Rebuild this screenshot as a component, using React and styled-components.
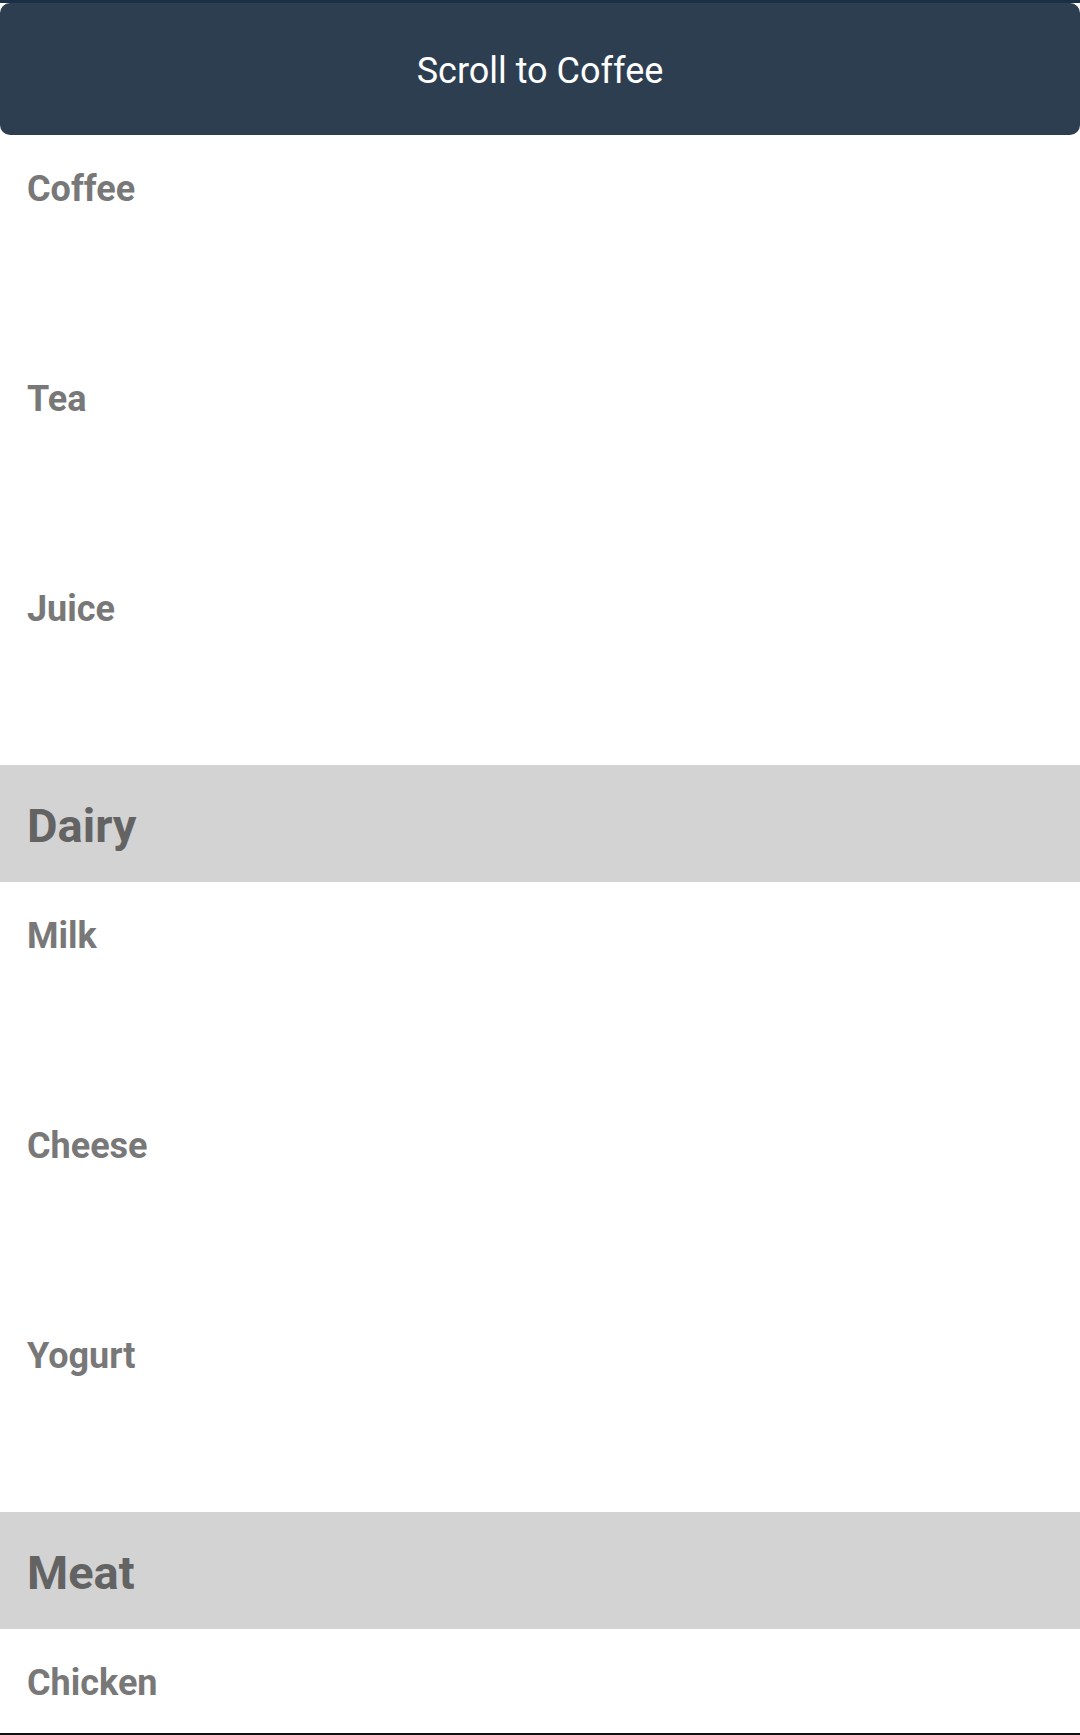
import React from 'react'
import styled, { createGlobalStyle } from 'styled-components'

const GlobalStyle = createGlobalStyle`
  html, body {
    margin: 0;
    padding: 0;
    background: #ffffff;
    font-family: Roboto, "Liberation Sans", Arial, sans-serif;
  }
  * {
    box-sizing: border-box;
  }
`

const Screen = styled.div`
  height: 1735px;
  display: flex;
  flex-direction: column;
  overflow: hidden;
  background: #ffffff;
  border-bottom: 2px solid #111111;
`

const StatusStrip = styled.div`
  height: 3px;
  flex-shrink: 0;
  background: #1b2f47;
`

const ScrollButton = styled.button`
  flex-shrink: 0;
  height: 132px;
  width: 100%;
  border: none;
  border-radius: 10px;
  background: #2d3e50;
  color: #ffffff;
  font-family: Roboto, "Liberation Sans", Arial, sans-serif;
  font-size: 36px;
  font-weight: 400;
  cursor: pointer;
  padding: 4px 0 0;

  &:focus {
    outline: none;
  }
`

const List = styled.div`
  flex: 1;
  overflow: hidden;
`

const SectionHeader = styled.div`
  height: 117px;
  padding: 33px 27px 0;
  background: #d3d3d3;
  color: #636363;
  font-size: 47px;
  font-weight: 700;
  line-height: 56px;
`

const Item = styled.div`
  height: 210px;
  padding: 33px 27px 0;
  color: #787878;
  font-size: 36px;
  font-weight: 700;
  line-height: 43px;
`

const sections = [
  { title: null, items: ['Coffee', 'Tea', 'Juice'] },
  { title: 'Dairy', items: ['Milk', 'Cheese', 'Yogurt'] },
  { title: 'Meat', items: ['Chicken'] }
]

export default function App() {
  return (
    <Screen>
      <GlobalStyle />
      <StatusStrip />
      <ScrollButton>Scroll to Coffee</ScrollButton>
      <List>
        {sections.map((section, i) => (
          <React.Fragment key={i}>
            {section.title ? <SectionHeader>{section.title}</SectionHeader> : null}
            {section.items.map(item => (
              <Item key={item}>{item}</Item>
            ))}
          </React.Fragment>
        ))}
      </List>
    </Screen>
  )
}
